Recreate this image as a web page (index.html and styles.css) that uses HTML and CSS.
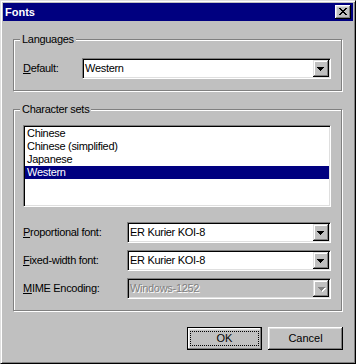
FILE: index.html
```html
<!DOCTYPE html>
<html>
<head>
<meta charset="utf-8">
<link rel="stylesheet" href="styles.css">
</head>
<body>
<div class="window">
  <div class="titlebar">
    <span class="title">Fonts</span>
    <span class="close">
      <svg width="8" height="7" viewBox="0 0 8 7" shape-rendering="crispEdges">
        <g fill="#000">
          <rect x="0" y="0" width="2" height="1"/><rect x="6" y="0" width="2" height="1"/>
          <rect x="1" y="1" width="2" height="1"/><rect x="5" y="1" width="2" height="1"/>
          <rect x="2" y="2" width="4" height="1"/>
          <rect x="3" y="3" width="2" height="1"/>
          <rect x="2" y="4" width="4" height="1"/>
          <rect x="1" y="5" width="2" height="1"/><rect x="5" y="5" width="2" height="1"/>
          <rect x="0" y="6" width="2" height="1"/><rect x="6" y="6" width="2" height="1"/>
        </g>
      </svg>
    </span>
  </div>
  <div class="body">
    <section class="group group-lang">
      <span class="legend">Languages</span>
      <div class="lang-row">
        <span class="field-label"><u>D</u>efault:</span>
        <div class="combo">
          <span class="combo-text">Western</span>
          <span class="drop"><svg width="7" height="4" viewBox="0 0 7 4" shape-rendering="crispEdges"><g class="arrow"><rect x="0" y="0" width="7" height="1"/><rect x="1" y="1" width="5" height="1"/><rect x="2" y="2" width="3" height="1"/><rect x="3" y="3" width="1" height="1"/></g></svg></span>
        </div>
      </div>
    </section>
    <section class="group group-charset">
      <span class="legend">Character sets</span>
      <ul class="listbox">
        <li>Chinese</li>
        <li>Chinese (simplified)</li>
        <li>Japanese</li>
        <li class="selected">Western</li>
      </ul>
      <div class="fields">
        <span class="field-label"><u>P</u>roportional font:</span>
        <div class="combo">
          <span class="combo-text">ER Kurier KOI-8</span>
          <span class="drop"><svg width="7" height="4" viewBox="0 0 7 4" shape-rendering="crispEdges"><g class="arrow"><rect x="0" y="0" width="7" height="1"/><rect x="1" y="1" width="5" height="1"/><rect x="2" y="2" width="3" height="1"/><rect x="3" y="3" width="1" height="1"/></g></svg></span>
        </div>
        <span class="field-label"><u>F</u>ixed-width font:</span>
        <div class="combo">
          <span class="combo-text">ER Kurier KOI-8</span>
          <span class="drop"><svg width="7" height="4" viewBox="0 0 7 4" shape-rendering="crispEdges"><g class="arrow"><rect x="0" y="0" width="7" height="1"/><rect x="1" y="1" width="5" height="1"/><rect x="2" y="2" width="3" height="1"/><rect x="3" y="3" width="1" height="1"/></g></svg></span>
        </div>
        <span class="field-label"><u>M</u>IME Encoding:</span>
        <div class="combo disabled">
          <span class="combo-text">Windows-1252</span>
          <span class="drop"><svg width="8" height="5" viewBox="0 0 8 5" shape-rendering="crispEdges"><g fill="#fff"><rect x="1" y="1" width="7" height="1"/><rect x="2" y="2" width="5" height="1"/><rect x="3" y="3" width="3" height="1"/><rect x="4" y="4" width="1" height="1"/></g><g fill="#808080"><rect x="0" y="0" width="7" height="1"/><rect x="1" y="1" width="5" height="1"/><rect x="2" y="2" width="3" height="1"/><rect x="3" y="3" width="1" height="1"/></g></svg></span>
        </div>
      </div>
    </section>
    <div class="buttons">
      <button class="btn btn-default"><span class="focus-ring"></span>OK</button>
      <button class="btn">Cancel</button>
    </div>
  </div>
</div>
</body>
</html>
```
FILE: styles.css
```css
* {
  box-sizing: border-box;
  margin: 0;
  padding: 0;
}

body {
  margin: 0;
  background: #c0c0c0;
  font-family: "Liberation Sans", Arial, sans-serif;
  font-size: 11px;
  line-height: 13px;
  letter-spacing: -0.3px;
  color: #000;
}

.window {
  width: 356px;
  height: 364px;
  background: #c0c0c0;
  border: 1px solid;
  border-color: #dfdfdf #000 #000 #dfdfdf;
  box-shadow: inset 1px 1px #fff, inset -1px -1px #808080;
  padding: 2px;
  display: flex;
  flex-direction: column;
}

.titlebar {
  height: 18px;
  background: #000080;
  color: #fff;
  font-weight: bold;
  letter-spacing: 0;
  display: flex;
  align-items: center;
  justify-content: space-between;
  padding: 0 2px 0 2px;
}

.close {
  width: 16px;
  height: 14px;
  background: #c0c0c0;
  box-shadow: inset -1px -1px #000, inset 1px 1px #fff, inset -2px -2px #808080, inset 2px 2px #dfdfdf;
  display: flex;
  align-items: center;
  justify-content: center;
  padding: 0 1px 1px 0;
}

.close svg {
  display: block;
}

.body {
  flex: 1;
  display: flex;
  flex-direction: column;
  padding: 18px 10px 0 10px;
}

.group {
  position: relative;
  border: 1px solid #808080;
  box-shadow: inset 1px 1px #fff, 1px 1px #fff;
  margin-right: 1px;
}

.legend {
  position: absolute;
  top: -7px;
  left: 6px;
  padding: 0 2px;
  background: #c0c0c0;
}

.group-lang {
  height: 52px;
  padding: 18px 10px 0 9px;
}

.group-charset {
  margin-top: 18px;
  height: 202px;
  padding: 15px 10px 0 9px;
}

.lang-row {
  display: grid;
  grid-template-columns: 59px 1fr;
  align-items: center;
}

.fields {
  display: grid;
  grid-template-columns: 104px 1fr;
  grid-auto-rows: 21px;
  row-gap: 7px;
  align-items: center;
}

.field-label {
  white-space: nowrap;
}

.combo {
  height: 21px;
  border: 1px solid;
  border-color: #808080 #fff #fff #808080;
  box-shadow: inset 1px 1px #000, inset -1px -1px #dfdfdf;
  padding: 1px;
  background: #fff;
  display: flex;
}

.combo-text {
  flex: 1;
  padding-left: 1px;
  line-height: 17px;
  white-space: nowrap;
  overflow: hidden;
}

.drop {
  width: 16px;
  height: 17px;
  background: #c0c0c0;
  box-shadow: inset -1px -1px #000, inset 1px 1px #dfdfdf, inset -2px -2px #808080, inset 2px 2px #fff;
  display: flex;
  align-items: center;
  justify-content: center;
  padding: 0 1px 0 0;
}

.drop svg {
  display: block;
}

.arrow {
  fill: #000;
}

.combo.disabled {
  background: #c0c0c0;
}

.combo.disabled .combo-text {
  color: #808080;
  text-shadow: 1px 1px #fff;
}

.combo.disabled .drop {
  padding: 1px 0 0 1px;
}

.listbox {
  list-style: none;
  height: 82px;
  margin-bottom: 15px;
  border: 1px solid;
  border-color: #808080 #fff #fff #808080;
  box-shadow: inset 1px 1px #000, inset -1px -1px #dfdfdf;
  padding: 1px;
  background: #fff;
}

.listbox li {
  height: 13px;
  line-height: 13px;
  padding-left: 2px;
  white-space: nowrap;
}

.listbox li.selected {
  background: #000080;
  color: #fff;
}

.buttons {
  margin-top: 16px;
  display: flex;
  justify-content: flex-end;
  gap: 6px;
}

.btn {
  position: relative;
  width: 75px;
  height: 23px;
  background: #c0c0c0;
  border: none;
  font: inherit;
  letter-spacing: 0;
  color: #000;
  box-shadow: inset -1px -1px #000, inset 1px 1px #fff, inset -2px -2px #808080, inset 2px 2px #dfdfdf;
}

.btn-default {
  border: 1px solid #000;
  box-shadow: inset -1px -1px #808080, inset 1px 1px #fff, inset 2px 2px #dfdfdf;
}

.focus-ring {
  position: absolute;
  top: 3px;
  left: 2px;
  right: 2px;
  bottom: 3px;
  border: 1px dotted #000;
}
```
